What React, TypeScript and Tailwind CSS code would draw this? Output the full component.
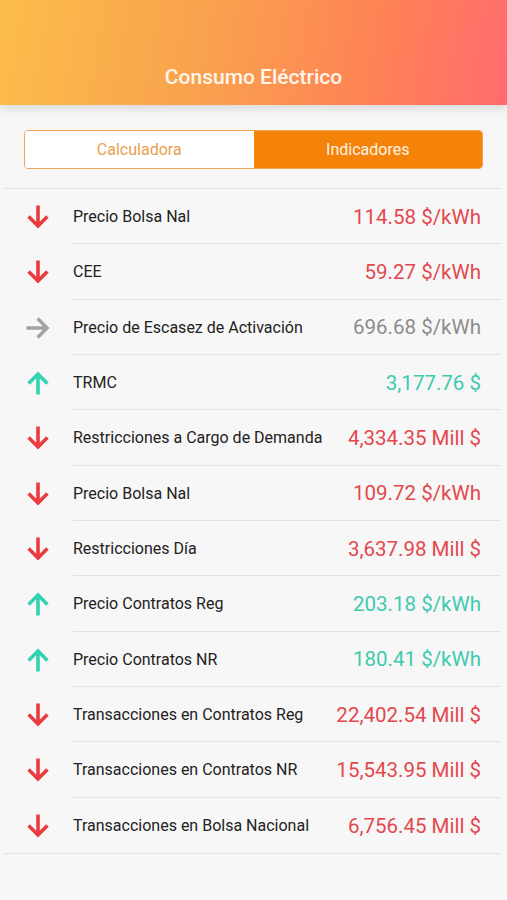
import React from "react";

type Dir = "down" | "up" | "flat";
const rows: { dir: Dir; label: string; value: string }[] = [
  { dir: "down", label: "Precio Bolsa Nal", value: "114.58 $/kWh" },
  { dir: "down", label: "CEE", value: "59.27 $/kWh" },
  { dir: "flat", label: "Precio de Escasez de Activación", value: "696.68 $/kWh" },
  { dir: "up", label: "TRMC", value: "3,177.76 $" },
  { dir: "down", label: "Restricciones a Cargo de Demanda", value: "4,334.35 Mill $" },
  { dir: "down", label: "Precio Bolsa Nal", value: "109.72 $/kWh" },
  { dir: "down", label: "Restricciones Día", value: "3,637.98 Mill $" },
  { dir: "up", label: "Precio Contratos Reg", value: "203.18 $/kWh" },
  { dir: "up", label: "Precio Contratos NR", value: "180.41 $/kWh" },
  { dir: "down", label: "Transacciones en Contratos Reg", value: "22,402.54 Mill $" },
  { dir: "down", label: "Transacciones en Contratos NR", value: "15,543.95 Mill $" },
  { dir: "down", label: "Transacciones en Bolsa Nacional", value: "6,756.45 Mill $" },
];

function Arrow({ dir }: { dir: Dir }) {
  const color = dir === "down" ? "#ea3b3e" : dir === "up" ? "#33d3b1" : "#a3a3a3";
  const rot = dir === "down" ? 0 : dir === "up" ? 180 : -90;
  return (
    <svg width="24" height="24" viewBox="0 0 24 24" style={{ transform: `rotate(${rot}deg)` }}>
      <path
        d="M12 0.5V20.5M2.6 11.6L12 21L21.4 11.6"
        fill="none"
        stroke={color}
        strokeWidth="3.6"
        strokeLinejoin="miter"
        strokeLinecap="butt"
      />
    </svg>
  );
}

export default function App() {
  return (
    <div className="min-h-[900px] bg-[#f8f7f7] font-['Roboto',sans-serif]">
      <div className="h-[105px] bg-[linear-gradient(100deg,#fcbd4a_0%,#f9a24e_40%,#ff8156_75%,#ff6b6f_100%)] shadow-[0_4px_10px_rgba(0,0,0,0.12)] relative z-10 flex justify-center pt-[63px]">
        <h1 className="text-[21px] leading-[28px] font-medium text-[#fff6ec]">Consumo Eléctrico</h1>
      </div>

      <div className="mx-[24px] mt-[25px] h-[39px] flex rounded-[4px] border border-[#f1a253] overflow-hidden">
        <div className="flex-1 bg-white flex items-center justify-center text-[16px] text-[#e9a050]">
          Calculadora
        </div>
        <div className="flex-1 bg-[#f58309] flex items-center justify-center text-[16px] text-[#fff3e6]">
          Indicadores
        </div>
      </div>

      <div className="mt-[19px] mx-[4px] mr-[6px] border-t border-b border-[#e4e2e2]">
        {rows.map((r, i) => {
          const valColor =
            r.dir === "down" ? "text-[#e2484d]" : r.dir === "up" ? "text-[#3fcaae]" : "text-[#8c8c8c]";
          return (
            <div key={i} className="flex h-[55.33px]">
              <div className="w-[69px] flex items-center pl-[22px] pt-[1px]">
                <Arrow dir={r.dir} />
              </div>
              <div
                className={`flex-1 flex items-center pr-[20px] pt-[2px] ${
                  i < rows.length - 1 ? "border-b border-[#e4e2e2]" : ""
                }`}
              >
                <span className="flex-1 text-[16px] text-[#222] whitespace-nowrap">{r.label}</span>
                <span className={`text-[20.5px] ${valColor} whitespace-nowrap`}>{r.value}</span>
              </div>
            </div>
          );
        })}
      </div>
    </div>
  );
}
